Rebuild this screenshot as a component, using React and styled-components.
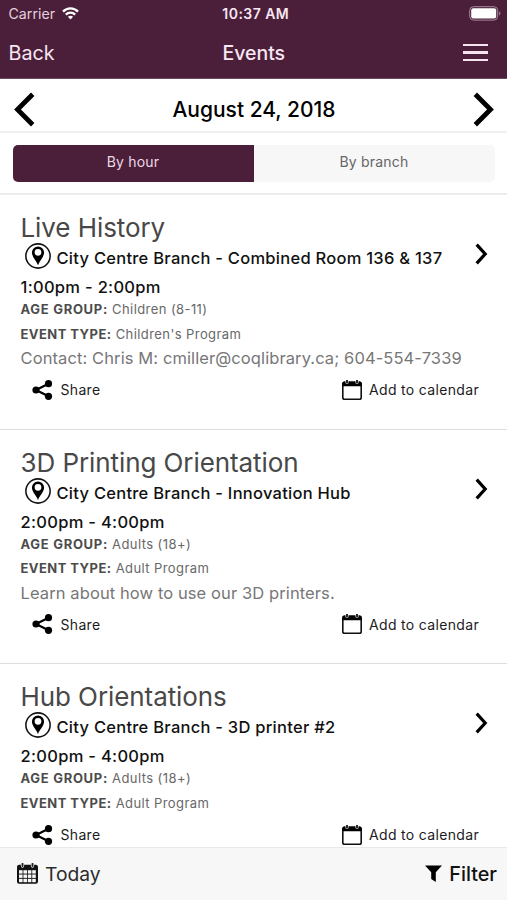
import React from "react";
import styled, { createGlobalStyle } from "styled-components";

const GlobalStyle = createGlobalStyle`
  * {
    box-sizing: border-box;
  }
  body {
    margin: 0;
    background: #fff;
    font-family: Inter, "Liberation Sans", sans-serif;
    color: #111;
  }
  svg {
    display: block;
    flex: none;
  }
`;

const Screen = styled.div`
  height: 900px;
  display: flex;
  flex-direction: column;
  overflow: hidden;
`;

const Header = styled.header`
  height: 79px;
  background: #4b1f3a;
  color: #f8e6f2;
  border-bottom: 1px solid #6f4a61;
`;

const StatusBar = styled.div`
  height: 27px;
  padding: 0 6px 0 8.5px;
  display: grid;
  grid-template-columns: 1fr auto 1fr;
  align-items: center;
  font-size: 14.2px;
`;

const Carrier = styled.div`
  display: flex;
  align-items: center;
  gap: 7px;
  color: #e6d0df;
`;

const Clock = styled.div`
  font-weight: 600;
  font-size: 14px;
  letter-spacing: 0.45px;
  padding-left: 2px;
`;

const Battery = styled.div`
  justify-self: end;
`;

const NavBar = styled.nav`
  height: 51px;
  padding: 0 19px 0 8.5px;
  display: grid;
  grid-template-columns: 1fr auto 1fr;
  align-items: center;
  font-size: 19.7px;
`;

const NavTitle = styled.div`
  font-weight: 550;
  font-size: 19.5px;
  padding-left: 11px;
`;

const MenuButton = styled.div`
  justify-self: end;
  width: 25px;
  display: grid;
  gap: 5px;
`;

const MenuLine = styled.span`
  height: 2.6px;
  background: #f6e3f0;
`;

const DateRow = styled.div`
  height: 54px;
  padding: 8px 13px 0 14px;
  display: flex;
  align-items: center;
  justify-content: space-between;
  border-bottom: 2px solid #f0f0f0;
`;

const DateLabel = styled.div`
  font-size: 21px;
  font-weight: 500;
  color: #000;
`;

const TabRow = styled.div`
  height: 62px;
  padding: 12px 12px 0 13px;
  display: flex;
  border-bottom: 2px solid #ececec;
`;

const Tab = styled.div`
  flex: 1;
  height: 37px;
  padding: 0 1px 4px 0;
  display: flex;
  align-items: center;
  justify-content: center;
  font-size: 14px;
  letter-spacing: 0.2px;
  color: ${(p) => (p.$active ? "#eed8e6" : "#666")};
  background: ${(p) => (p.$active ? "#4b1f3a" : "#f7f7f7")};
  border-radius: ${(p) => (p.$active ? "5px 0 0 5px" : "0 5px 5px 0")};
`;

const EventList = styled.main`
  flex: 1;
  min-height: 0;
  overflow: hidden;
`;

const EventCard = styled.article`
  height: 234.5px;
  padding: 17px 19px 0 20.5px;
  display: grid;
  grid-template-columns: 1fr auto;
  align-content: start;
  border-bottom: 1.5px solid #dedede;
`;

const Details = styled.div`
  white-space: nowrap;
  min-width: 0;
`;

const EventTitle = styled.h2`
  margin: 0;
  font-size: 26px;
  font-weight: 400;
  line-height: 31px;
  letter-spacing: -0.08px;
  color: #484848;
`;

const Location = styled.div`
  height: 33px;
  padding-left: 4px;
  display: flex;
  align-items: flex-start;
  gap: 6px;
  font-size: 16.5px;
  font-weight: 500;
  line-height: 31px;
  letter-spacing: 0.26px;
`;

const Time = styled.div`
  height: 21px;
  font-size: 16.5px;
  font-weight: 500;
  line-height: 22px;
  letter-spacing: 0.3px;
`;

const Meta = styled.div`
  font-size: 13px;
  line-height: 24.5px;
  letter-spacing: 0.42px;
  color: #686868;
`;

const MetaName = styled.strong`
  font-weight: 700;
  letter-spacing: ${(p) => p.$spacing};
  color: #4c4c4c;
`;

const Description = styled.div`
  font-size: 16.5px;
  line-height: 24px;
  letter-spacing: 0.1px;
  color: #777;
`;

const Arrow = styled.div`
  padding-top: 31px;
`;

const Actions = styled.div`
  grid-column: 1 / -1;
  height: 24px;
  margin-top: 7.5px;
  padding: 0 9px 0 11.5px;
  display: flex;
  align-items: center;
  justify-content: space-between;
`;

const Action = styled.div`
  display: flex;
  align-items: center;
  gap: 7.5px;
  font-size: 14px;
  letter-spacing: 0.33px;
  color: #1c1c1c;
`;

const Footer = styled.footer`
  height: 53.5px;
  padding: 0 10px 0 17px;
  display: flex;
  align-items: center;
  justify-content: space-between;
  background: #f7f7f7;
  border-top: 1px solid #e9e9e9;
`;

const FooterItem = styled.div`
  display: flex;
  align-items: center;
  gap: 7px;
  font-size: ${(p) => p.$size || "19.3px"};
  font-weight: ${(p) => p.$weight || 400};
  color: ${(p) => p.$color || "#2c2c2c"};
`;

const WifiIcon = () => (
  <svg width="17" height="13" viewBox="0 0 17 13" fill="none" stroke="#fff" strokeWidth="2.3">
    <path d="M1 4.6C5.2.3 11.8.3 16 4.6" />
    <path d="M3.8 7.6c2.7-2.6 6.7-2.6 9.4 0" />
    <path d="M8.5 12.6 5.9 9.7c1.5-1.3 3.7-1.3 5.2 0z" fill="#fff" stroke="none" />
  </svg>
);

const BatteryIcon = () => (
  <svg width="32" height="15" viewBox="0 0 32 15">
    <rect x="0.7" y="0.7" width="28" height="13.4" rx="3.8" fill="none" stroke="#a58a9b" />
    <rect x="2.2" y="2.3" width="25" height="10.2" rx="2" fill="#fff" />
    <path d="M30.2 5.3c1.7.8 1.7 3.4 0 4.2z" fill="#a58a9b" />
  </svg>
);

const DateChevron = ({ left }) => (
  <svg width="21" height="35" viewBox="0 0 21 35">
    <polyline
      points={left ? "18.7,2.2 3.5,17.5 18.7,32.8" : "2.3,2.2 17.5,17.5 2.3,32.8"}
      fill="none"
      stroke="#000"
      strokeWidth="4.8"
    />
  </svg>
);

const EventChevron = () => (
  <svg width="13" height="22" viewBox="0 0 13 22">
    <polyline points="1.7,1.7 10.2,11 1.7,20.3" fill="none" stroke="#000" strokeWidth="3.2" />
  </svg>
);

const PinIcon = () => (
  <svg width="26" height="26" viewBox="0 0 27 27">
    <circle cx="13.5" cy="13.5" r="12.6" fill="#fff" stroke="#111" strokeWidth="1.6" />
    <path
      fillRule="evenodd"
      d="M13.5 23C12.2 18.8 7.2 14.6 7.2 9.9a6.3 6.3 0 0 1 12.6 0c0 4.7-5 8.9-6.3 13.1zM13.5 6.2a3.5 3.5 0 1 0 0 7 3.5 3.5 0 0 0 0-7z"
    />
  </svg>
);

const ShareIcon = () => (
  <svg width="21" height="20" viewBox="0 0 21 20">
    <path d="M16.5 3.8 4 10l12.5 6.2" fill="none" stroke="#000" strokeWidth="2.2" />
    <circle cx="4" cy="10" r="3.6" />
    <circle cx="16.5" cy="3.7" r="3.6" />
    <circle cx="16.5" cy="16.3" r="3.6" />
  </svg>
);

const CalendarIcon = () => (
  <svg width="20" height="20" viewBox="0 0 20 20">
    <rect x="0.8" y="2.2" width="18.4" height="17" rx="1.8" fill="#fff" stroke="#111" strokeWidth="1.6" />
    <path d="M0.5 6.2V3.2q0-1.7 1.7-1.7h15.6q1.7 0 1.7 1.7v3z" />
    <path d="M5 0v2.6M15 0v2.6" stroke="#fff" strokeWidth="3" strokeLinecap="round" />
    <path d="M5 0.3v2.5M15 0.3v2.5" stroke="#111" strokeWidth="1.8" strokeLinecap="round" />
  </svg>
);

const TodayIcon = () => (
  <svg width="21" height="21" viewBox="0 0 21 21">
    <rect y="1.8" width="21" height="19" rx="2.2" fill="#111" />
    {[2, 6.4, 10.8, 15.2].map((x) =>
      [7.2, 11.5, 15.8].map((y) => (
        <rect key={`${x}-${y}`} x={x} y={y} width="3.6" height="3.4" fill="#f7f7f7" />
      ))
    )}
    <path d="M5.5 0.5v2.6M15.5 0.5v2.6" stroke="#f7f7f7" strokeWidth="3.2" strokeLinecap="round" />
    <path d="M5.5 0.8v2.3M15.5 0.8v2.3" stroke="#222" strokeWidth="1.9" strokeLinecap="round" />
  </svg>
);

const FunnelIcon = () => (
  <svg width="17" height="17" viewBox="0 0 17 17">
    <path d="M0 0.5h17l-6.2 6.8V17L6.2 14V7.3z" />
  </svg>
);

const events = [
  {
    title: "Live History",
    location: "City Centre Branch - Combined Room 136 & 137",
    time: "1:00pm - 2:00pm",
    age: "Children (8-11)",
    type: "Children's Program",
    description: "Contact: Chris M: cmiller@coqlibrary.ca; 604-554-7339",
  },
  {
    title: "3D Printing Orientation",
    location: "City Centre Branch - Innovation Hub",
    time: "2:00pm - 4:00pm",
    age: "Adults (18+)",
    type: "Adult Program",
    description: "Learn about how to use our 3D printers.",
  },
  {
    title: "Hub Orientations",
    location: "City Centre Branch - 3D printer #2",
    time: "2:00pm - 4:00pm",
    age: "Adults (18+)",
    type: "Adult Program",
  },
];

const Event = ({ event }) => (
  <EventCard>
    <Details>
      <EventTitle>{event.title}</EventTitle>
      <Location>
        <PinIcon />
        {event.location}
      </Location>
      <Time>{event.time}</Time>
      <Meta>
        <MetaName $spacing="0.7px">AGE GROUP:</MetaName> {event.age}
      </Meta>
      <Meta>
        <MetaName $spacing="0.45px">EVENT TYPE:</MetaName> {event.type}
      </Meta>
      {event.description && <Description>{event.description}</Description>}
    </Details>
    <Arrow>
      <EventChevron />
    </Arrow>
    <Actions>
      <Action>
        <ShareIcon />
        Share
      </Action>
      <Action>
        <CalendarIcon />
        Add to calendar
      </Action>
    </Actions>
  </EventCard>
);

const App = () => {
  return (
    <Screen>
      <GlobalStyle />
      <Header>
        <StatusBar>
          <Carrier>
            Carrier
            <WifiIcon />
          </Carrier>
          <Clock>10:37 AM</Clock>
          <Battery>
            <BatteryIcon />
          </Battery>
        </StatusBar>
        <NavBar>
          <div>Back</div>
          <NavTitle>Events</NavTitle>
          <MenuButton>
            <MenuLine />
            <MenuLine />
            <MenuLine />
          </MenuButton>
        </NavBar>
      </Header>
      <DateRow>
        <DateChevron left />
        <DateLabel>August 24, 2018</DateLabel>
        <DateChevron />
      </DateRow>
      <TabRow>
        <Tab $active>By hour</Tab>
        <Tab>By branch</Tab>
      </TabRow>
      <EventList>
        {events.map((event) => (
          <Event key={event.title} event={event} />
        ))}
      </EventList>
      <Footer>
        <FooterItem>
          <TodayIcon />
          Today
        </FooterItem>
        <FooterItem $size="19.8px" $weight={450} $color="#111">
          <FunnelIcon />
          Filter
        </FooterItem>
      </Footer>
    </Screen>
  );
};

export default App;
